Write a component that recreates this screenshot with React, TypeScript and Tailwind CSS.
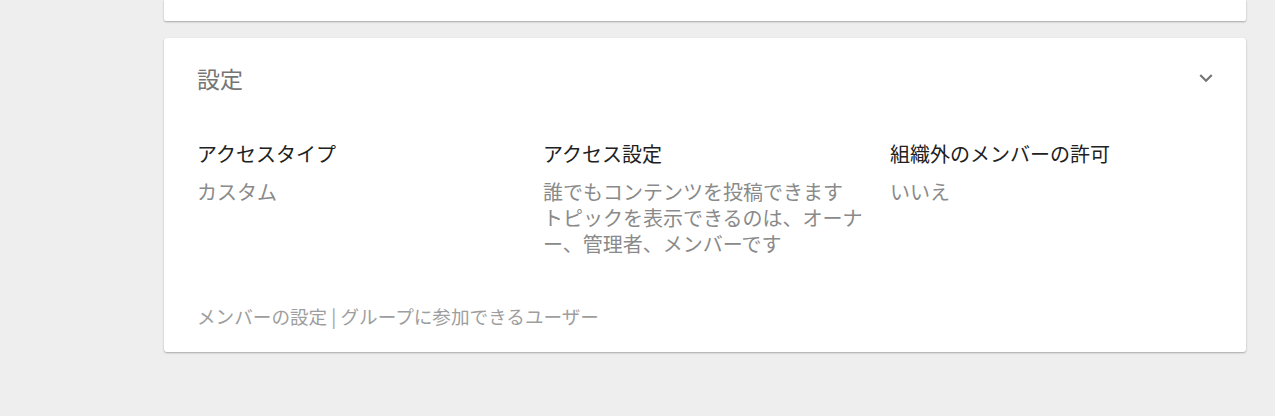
import React from "react";

const font = {
  fontFamily: '"Noto Sans CJK JP", "Noto Sans", Roboto, sans-serif',
};

const columns = [
  { label: "アクセスタイプ", value: ["カスタム"] },
  {
    label: "アクセス設定",
    value: [
      "誰でもコンテンツを投稿できます",
      "トピックを表示できるのは、オーナー、管理者、メンバーです",
    ],
  },
  { label: "組織外のメンバーの許可", value: ["いいえ"] },
];

const ChevronDown = () => (
  <svg width="26" height="26" viewBox="0 0 24 24" className="text-[#757575]">
    <path
      fill="currentColor"
      d="M16.59 8.59 12 13.17 7.41 8.59 6 10l6 6 6-6z"
    />
  </svg>
);

export default function App() {
  return (
    <div
      className="w-[1275px] h-[416px] bg-[#eeeeee] overflow-hidden"
      style={font}
    >
      <div className="ml-[164px] w-[1082px] flex flex-col gap-[17px]">
        <div className="h-[21px] bg-white rounded-b-[2px] shadow-[0_1px_2px_rgba(0,0,0,0.3)]" />

        <div className="bg-white rounded-[3px] shadow-[0_1px_2px_rgba(0,0,0,0.3)] pl-[33px] pr-[27px] pt-[26px] pb-[24px]">
          <div className="flex items-center justify-between h-[28px]">
            <h2 className="text-[23px] leading-[28px] text-[#757575] font-normal">
              設定
            </h2>
            <ChevronDown />
          </div>

          <div className="grid grid-cols-[346px_347px_1fr] mt-[50px]">
            {columns.map((col) => (
              <div key={col.label} className="pr-5">
                <p className="text-[20px] leading-[24px] text-[#212121]">
                  {col.label}
                </p>
                <div className="mt-[13px] text-[20px] leading-[26px] text-[#8a8a8a]">
                  {col.value.map((line) => (
                    <p key={line}>{line}</p>
                  ))}
                </div>
              </div>
            ))}
          </div>

          <p className="mt-[47px] text-[18.6px] leading-[24px] text-[#9e9e9e]">
            メンバーの設定 | グループに参加できるユーザー
          </p>
        </div>
      </div>
    </div>
  );
}
